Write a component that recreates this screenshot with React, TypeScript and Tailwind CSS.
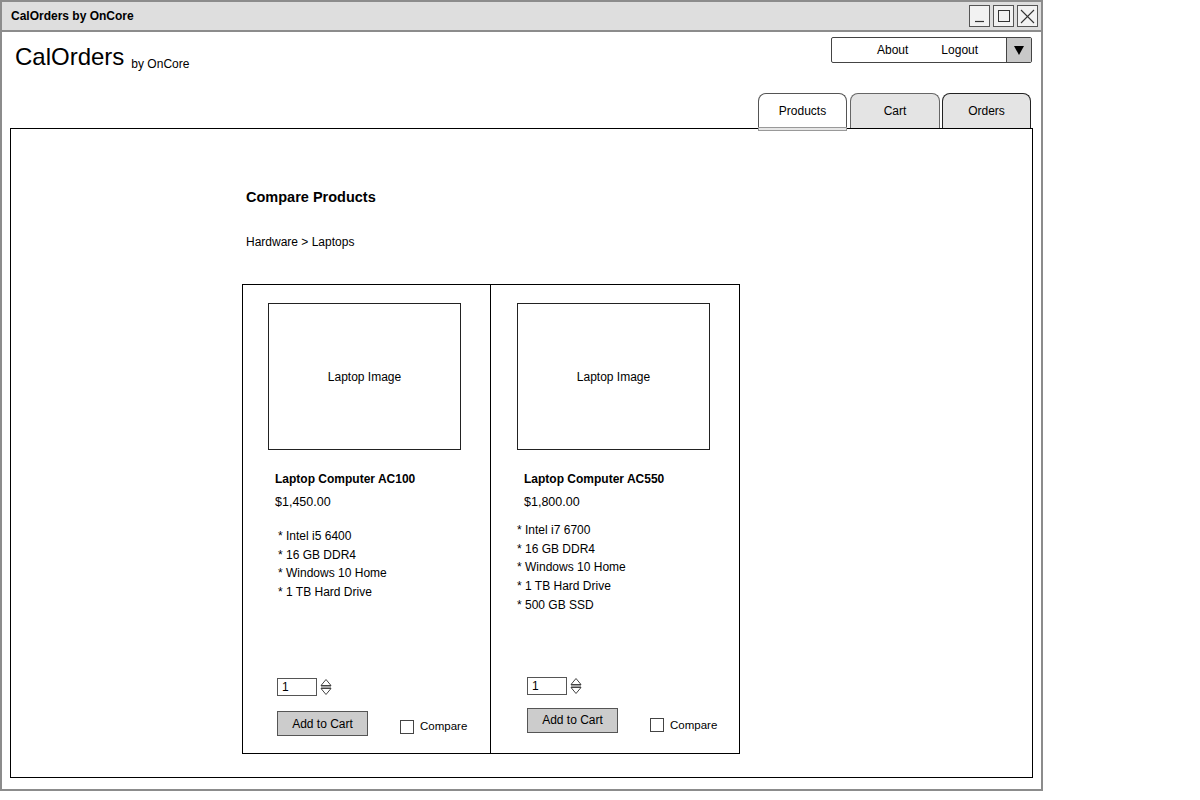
import React from "react";

const FONT = "font-[family-name:'Liberation_Sans',Arial,sans-serif]";

function Spinner() {
  return (
    <div className="flex items-center gap-[3px] h-[18px]">
      <div className="w-[40px] h-[18px] border border-[#555] bg-white text-[12px] leading-[16px] pl-[4px]">1</div>
      <svg width="12" height="18" viewBox="0 0 12 18" className="block">
        <polygon points="1,7.5 6,1.5 11,7.5" fill="none" stroke="#444" strokeWidth="1" />
        <line x1="1" y1="9" x2="11" y2="9" stroke="#444" strokeWidth="1" />
        <polygon points="1,10.5 6,16.5 11,10.5" fill="none" stroke="#444" strokeWidth="1" />
      </svg>
    </div>
  );
}

function Column({
  name,
  price,
  specs,
  imgMl,
  nameMl,
  specMl,
  specMt,
  ctrlMl,
  btnMt,
  cbMt,
  pb,
  border,
}: {
  name: string;
  price: string;
  specs: string[];
  imgMl: string;
  nameMl: string;
  specMl: string;
  specMt: string;
  ctrlMl: string;
  btnMt: string;
  cbMt: string;
  pb: string;
  border: boolean;
}) {
  return (
    <div className={`flex flex-col h-full ${border ? "w-[248px] border-r border-black" : "flex-1"} ${pb}`}>
      <div className={`${imgMl} mt-[18px] w-[193px] h-[147px] border border-[#222] flex items-center justify-center text-[12px]`}>
        Laptop Image
      </div>
      <div className={`${nameMl} mt-[21px] text-[12px] leading-[16px] font-bold`}>{name}</div>
      <div className={`${nameMl} mt-[7px] text-[12.5px] leading-[16px]`}>{price}</div>
      <div className={`${specMl} ${specMt} flex flex-col text-[12px] leading-[18.7px]`}>
        {specs.map((s) => (
          <div key={s}>* {s}</div>
        ))}
      </div>
      <div className={`mt-auto ${ctrlMl} flex flex-col`}>
        <Spinner />
        <div className={`${btnMt} flex items-start`}>
          <div className="w-[91px] h-[25px] bg-[#cccccc] border border-[#555] flex items-center justify-center text-[12px]">
            Add to Cart
          </div>
          <div className={`ml-[32px] ${cbMt} flex items-center gap-[6px]`}>
            <div className="w-[14px] h-[14px] border border-[#444] bg-white" />
            <span className="text-[11.5px]">Compare</span>
          </div>
        </div>
      </div>
    </div>
  );
}

export default function App() {
  return (
    <div className={`w-[1200px] h-[800px] bg-white text-black ${FONT}`}>
      <div className="w-[1043px] h-[791px] border-2 border-[#8c8c8c] flex flex-col">
        {/* Title bar */}
        <div className="h-[30px] bg-[#dedede] border-b-2 border-[#8c8c8c] flex items-center justify-between pl-[9px] pr-[3px]">
          <span className="text-[12px] font-bold">CalOrders by OnCore</span>
          <div className="flex gap-[3px]">
            <div className="w-[21px] h-[22px] border border-[#555] bg-[#f2f2f2] flex items-center justify-center">
              <svg width="13" height="14" viewBox="0 0 13 14">
                <line x1="2" y1="12.5" x2="11" y2="12.5" stroke="#333" strokeWidth="1.2" />
              </svg>
            </div>
            <div className="w-[21px] h-[22px] border border-[#555] bg-[#f2f2f2] flex items-center justify-center">
              <div className="w-[12px] h-[12px] border border-[#333]" />
            </div>
            <div className="w-[21px] h-[22px] border border-[#555] bg-[#f2f2f2] flex items-center justify-center">
              <svg width="15" height="15" viewBox="0 0 15 15">
                <line x1="1" y1="1" x2="14" y2="14" stroke="#333" strokeWidth="1.1" />
                <line x1="14" y1="1" x2="1" y2="14" stroke="#333" strokeWidth="1.1" />
              </svg>
            </div>
          </div>
        </div>

        <div className="flex-1 flex flex-col px-[8px] pb-[11px]">
          {/* Header */}
          <div className="h-[96px] flex justify-between">
            <div className="pl-[5px] pt-[11px] flex items-start gap-[7px] h-fit">
              <span className="text-[24px] leading-[28px]">CalOrders</span>
              <span className="text-[12px] leading-[14px] pt-[14px]">by OnCore</span>
            </div>
            <div className="flex flex-col items-end justify-between pt-[5px]">
              <div className="mr-[1px] w-[201px] h-[26px] border border-[#444] rounded-[2px] flex text-[12px]">
                <div className="flex-1 flex items-center">
                  <span className="ml-[45px]">About</span>
                  <span className="ml-[33px]">Logout</span>
                </div>
                <div className="w-[25px] bg-[#c8c8c8] border-l border-[#444] flex items-center justify-center">
                  <svg width="10" height="9" viewBox="0 0 10 9">
                    <polygon points="0,0 10,0 5,9" fill="#000" />
                  </svg>
                </div>
              </div>
              <div className="flex items-end mr-[2px] text-[12px]">
                <div className="relative w-[89px] h-[35px] bg-white border border-[#555] border-b-0 rounded-t-[8px] flex items-center justify-center">
                  Products
                  <div className="absolute left-[-1px] right-[-1px] bottom-[-3px] h-[4px] bg-[#e6e6e6] border border-[#999]" />
                </div>
                <div className="ml-[3px] w-[90px] h-[35px] bg-[#e4e4e4] border border-[#666] border-b-0 rounded-t-[8px] flex items-center justify-center">
                  Cart
                </div>
                <div className="ml-[2px] w-[89px] h-[35px] bg-[#e4e4e4] border border-[#222] border-b-0 rounded-t-[8px] flex items-center justify-center">
                  Orders
                </div>
              </div>
            </div>
          </div>

          {/* Panel */}
          <div className="flex-1 border border-black pl-[231px] pt-[59px] flex flex-col">
            <div className="ml-[4px] text-[14.5px] leading-[18px] font-bold">Compare Products</div>
            <div className="ml-[4px] mt-[28px] text-[12px] leading-[16px]">Hardware &gt; Laptops</div>
            <div className="mt-[34px] w-[498px] h-[470px] border border-black flex">
              <Column
                border
                name="Laptop Computer AC100"
                price="$1,450.00"
                specs={["Intel i5 6400", "16 GB DDR4", "Windows 10 Home", "1 TB Hard Drive"]}
                imgMl="ml-[25px]"
                nameMl="ml-[32px]"
                specMl="ml-[35px]"
                specMt="mt-[17px]"
                ctrlMl="ml-[34px]"
                btnMt="mt-[15px]"
                cbMt="mt-[7px]"
                pb="pb-[17px]"
              />
              <Column
                border={false}
                name="Laptop Computer AC550"
                price="$1,800.00"
                specs={["Intel i7 6700", "16 GB DDR4", "Windows 10 Home", "1 TB Hard Drive", "500 GB SSD"]}
                imgMl="ml-[26px]"
                nameMl="ml-[33px]"
                specMl="ml-[26px]"
                specMt="mt-[11px]"
                ctrlMl="ml-[36px]"
                btnMt="mt-[13px]"
                cbMt="mt-[9px]"
                pb="pb-[19px]"
              />
            </div>
          </div>
        </div>
      </div>
    </div>
  );
}
